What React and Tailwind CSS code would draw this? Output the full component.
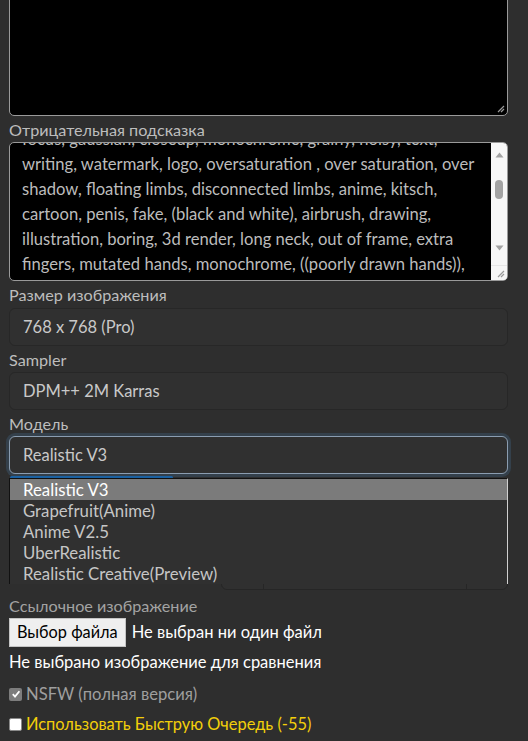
import React from 'react'

const lines = [
  'focus, gaussian, closeup, monochrome, grainy, noisy, text,',
  'writing, watermark, logo, oversaturation , over saturation, over',
  'shadow, floating limbs, disconnected limbs, anime, kitsch,',
  'cartoon, penis, fake, (black and white), airbrush, drawing,',
  'illustration, boring, 3d render, long neck, out of frame, extra',
  'fingers, mutated hands, monochrome, ((poorly drawn hands)),',
]

const models = [
  'Realistic V3',
  'Grapefruit(Anime)',
  'Anime V2.5',
  'UberRealistic',
  'Realistic Creative(Preview)',
]

function Grip() {
  return (
    <svg width="9" height="9" viewBox="0 0 9 9" className="absolute right-[2px] bottom-[2px]">
      <path d="M8 2 L2 8 M8 5 L5 8" stroke="#9a9a9a" strokeWidth="1.2" />
    </svg>
  )
}

function Label({ children, className = '' }) {
  return <div className={'relative text-[16.2px] leading-[20px] text-[#bdbdbd] ' + className}>{children}</div>
}

function Select({ value, focused }) {
  return (
    <div
      className={
        'h-[38px] flex items-center pl-[13px] rounded-md text-[16.5px] text-[#c9c9c9] bg-[#303030] ' +
        (focused
          ? 'border-[1.5px] border-[#8b9db0] shadow-[0_0_0_3px_#34404b]'
          : 'border border-[#272727]')
      }
    >
      {value}
    </div>
  )
}

export default function App() {
  return (
    <div
      className="min-h-[741px] bg-[#2e2e2e] overflow-hidden"
      style={{ fontFamily: 'Lato, "Noto Sans", sans-serif' }}
    >
      <div className="ml-[9px] w-[499px]">
        {/* prompt */}
        <div className="relative -mt-[14px] h-[130px] bg-black border border-[#9a9a9a] rounded-[5px]">
          <Grip />
        </div>

        <Label className="mt-[4px]">Отрицательная подсказка</Label>
        <div className="relative mt-[2px] h-[139px] bg-black border border-[#9a9a9a] rounded-[5px] overflow-hidden flex">
          <div className="flex-1 overflow-hidden pl-[12px]">
            <div className="-mt-[16px] text-[16.6px] leading-[25px] text-[#bcbcbc]">
              {lines.map((l) => (
                <div key={l} className="whitespace-nowrap">{l}</div>
              ))}
            </div>
          </div>
          <div className="w-[16px] bg-[#f7f7f7] flex flex-col items-center">
            <svg width="9" height="6" viewBox="0 0 9 6" className="mt-[9px]">
              <path d="M0.5 5.5 L4.5 0.5 L8.5 5.5 Z" fill="#a3a3a3" />
            </svg>
            <div className="mt-[22px] w-[8px] h-[19px] rounded bg-[#a3a3a3]" />
            <svg width="9" height="6" viewBox="0 0 9 6" className="mt-[46px]">
              <path d="M0.5 0.5 L4.5 5.5 L8.5 0.5 Z" fill="#a3a3a3" />
            </svg>
            <div className="mt-auto h-[15px] w-full bg-[#f7f7f7] border-t border-[#e6e6e6]" />
          </div>
          <Grip />
        </div>

        <Label className="mt-[4px]">Размер изображения</Label>
        <div className="mt-[3px]">
          <Select value="768 x 768 (Pro)" />
        </div>

        <Label className="mt-[4px]">Sampler</Label>
        <div className="mt-[2px]">
          <Select value="DPM++ 2M Karras" />
        </div>

        <Label className="mt-[4px]">Модель</Label>
        <div className="relative mt-[2px]">
          <Select value="Realistic V3" focused />
          <div className="mt-[2px] ml-[1px] h-[3px] w-[163px] rounded-full bg-[#1b62a3]" />
          <div className="h-[111px] flex items-end justify-end">
            <div className="w-[287px] h-[36px] flex border border-[#262626] rounded-md bg-[#303030]">
              <div className="w-[42px] border-r border-[#262626]" />
              <div className="flex-1" />
              <div className="w-[41px] border-l border-[#262626]" />
            </div>
          </div>

          <div className="absolute left-0 top-[42px] w-full h-[106px] bg-[#303030] border-t border-l border-[#111] border-r border-r-[#d0d0d0] text-[16.8px] leading-[21px] text-[#c6c6c6]">
            {models.map((m, i) => (
              <div
                key={m}
                className={'h-[21px] pl-[13px] ' + (i === 0 ? 'bg-[#7b7b7b] text-white' : '')}
              >
                {m}
              </div>
            ))}
          </div>
        </div>

        <div className="mt-[6px] text-[16.2px] leading-[20px] text-[#a3a3a3]">Ссылочное изображение</div>
        <div className="mt-[2px] flex items-center gap-[6px]">
          <button className="h-[29px] px-[7px] bg-[#efefef] border border-[#c4c4c4] text-[16.3px] text-black">
            Выбор файла
          </button>
          <span className="text-[16.5px] text-white">Не выбран ни один файл</span>
        </div>
        <div className="mt-[5px] text-[16.5px] leading-[20px] text-white">Не выбрано изображение для сравнения</div>

        <div className="mt-[12px] h-[20px] flex items-center gap-[4px]">
          <span className="w-[13px] h-[13px] rounded-[2px] bg-[#7d7d7d] flex items-center justify-center">
            <svg width="10" height="10" viewBox="0 0 10 10">
              <path d="M1.8 5.2 L4 7.6 L8.4 2.2" stroke="white" strokeWidth="1.8" fill="none" />
            </svg>
          </span>
          <span className="text-[16.6px] text-[#9f9f9f]">NSFW (полная версия)</span>
        </div>
        <div className="mt-[10px] h-[20px] flex items-center gap-[4px]">
          <span className="w-[13px] h-[13px] rounded-[2px] bg-white border border-[#8a8a8a]" />
          <span className="text-[16.4px] text-[#f3cf0a]">Использовать Быструю Очередь (-55)</span>
        </div>
      </div>
    </div>
  )
}
